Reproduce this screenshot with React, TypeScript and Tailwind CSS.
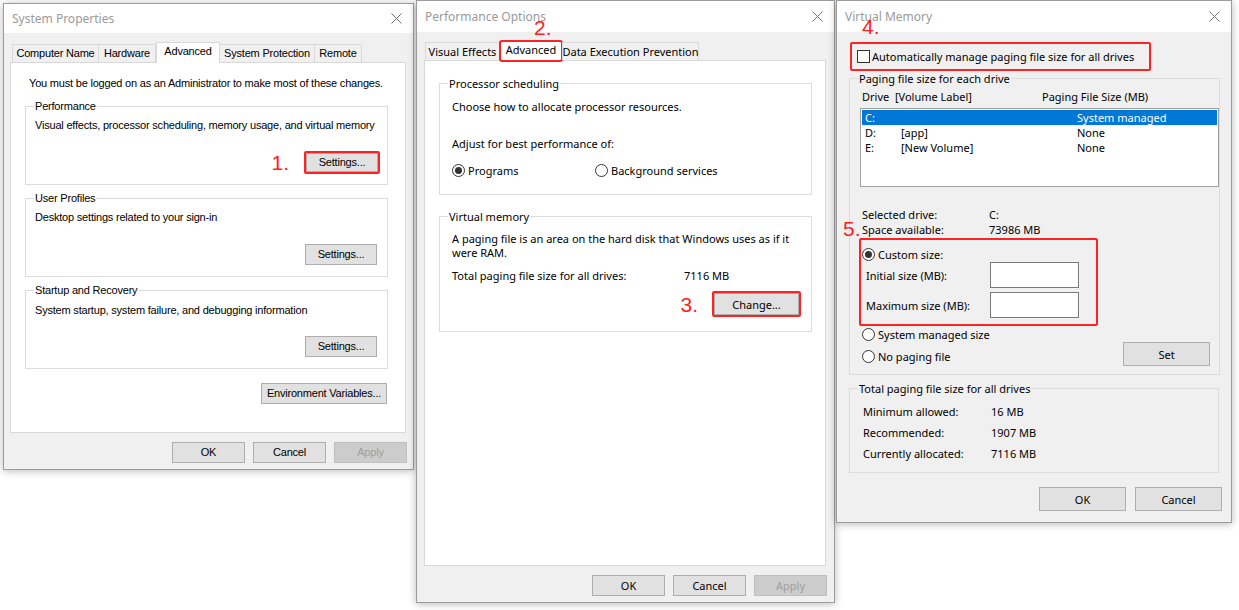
import React from 'react';

type Kids = { children?: React.ReactNode; className?: string };

const RED = 'border-[#ff2222]';

function CloseX() {
  return (
    <svg width="11" height="11" viewBox="0 0 11 11" className="shrink-0">
      <path d="M0.5 0.5L10.5 10.5M10.5 0.5L0.5 10.5" stroke="#707070" strokeWidth="1" />
    </svg>
  );
}

function Window({ title, className, bar, children }: Kids & { title: string; bar: string }) {
  return (
    <div
      className={`absolute flex flex-col bg-[#f0f0f0] border border-[#9c9c9c] shadow-[0_1px_8px_rgba(0,0,0,0.28)] leading-[15px] text-black whitespace-nowrap ${className}`}
    >
      <div className={`${bar} shrink-0 bg-white flex items-center justify-between pl-[8px] pr-[11px]`}>
        <span className="text-[12px] tracking-normal text-[#9a9a9a] font-['Noto_Sans',sans-serif]">{title}</span>
        <CloseX />
      </div>
      {children}
    </div>
  );
}

function Btn({ children, className = '', disabled = false }: Kids & { disabled?: boolean }) {
  return (
    <div
      className={`flex items-center justify-center border ${
        disabled ? 'border-[#bfbfbf] bg-[#cccccc] text-[#a0a0a0]' : 'border-[#adadad] bg-[#e1e1e1] text-black'
      } ${className}`}
    >
      {children}
    </div>
  );
}

function Group({ label, className = '', children }: Kids & { label: string }) {
  return (
    <fieldset className={`flex flex-col border border-[#dcdcdc] ${className}`}>
      <legend className="ml-[8px] px-[1px] leading-[15px]">{label}</legend>
      {children}
    </fieldset>
  );
}

function Radio({ checked = false }: { checked?: boolean }) {
  return (
    <span className="w-[13px] h-[13px] rounded-full border border-[#333333] bg-white flex items-center justify-center shrink-0">
      {checked && <span className="w-[7px] h-[7px] rounded-full bg-[#333333]" />}
    </span>
  );
}

function Num({ children, className = '' }: Kids) {
  return (
    <span className={`text-[#ff2020] text-[21px] leading-none tracking-normal font-['Liberation_Sans',Arial,sans-serif] ${className}`}>
      {children}
    </span>
  );
}

function Tab({ w, active = false, children }: Kids & { w: string; active?: boolean }) {
  if (active) {
    return (
      <div className={`${w} h-[21px] -mb-px bg-white border border-b-0 border-[#d9d9d9] flex items-center justify-center pb-[3px]`}>
        {children}
      </div>
    );
  }
  return (
    <div className={`${w} h-[18px] bg-[#f0f0f0] border border-b-0 border-[#d9d9d9] -ml-px first:ml-0 flex items-center justify-center`}>
      {children}
    </div>
  );
}

function SystemProperties() {
  return (
    <Window
      title="System Properties"
      bar="h-[29px]"
      className="left-[3px] top-[3px] w-[411px] h-[467px] text-[11px] tracking-[-0.2px] font-['Liberation_Sans',Arial,sans-serif]"
    >
      <div className="flex flex-col pl-[6px] pt-[8px]">
        <div className="relative z-10 flex items-end pl-[2px] h-[21px]">
          <Tab w="w-[87px]">Computer Name</Tab>
          <Tab w="w-[58px]">Hardware</Tab>
          <Tab w="w-[64px]" active>
            Advanced
          </Tab>
          <Tab w="w-[96px]">System Protection</Tab>
          <Tab w="w-[48px]">Remote</Tab>
        </div>
        <div className="w-[396px] h-[371px] bg-white border border-[#d9d9d9] pt-[13px] pl-[14px] flex flex-col">
          <p className="pl-[4px]">You must be logged on as an Administrator to make most of these changes.</p>

          <Group label="Performance" className="mt-[8px] w-[363px] h-[86px]">
            <p className="pl-[9px] mt-[4px]">Visual effects, processor scheduling, memory usage, and virtual memory</p>
            <div className="mt-[18px] mr-[7px] self-end flex items-center gap-[15px]">
              <Num>1.</Num>
              <div className={`border-2 ${RED} rounded-[2px]`}>
                <Btn className="w-[72px] h-[19px]">Settings...</Btn>
              </div>
            </div>
          </Group>

          <Group label="User Profiles" className="mt-[6px] w-[363px] h-[86px]">
            <p className="pl-[9px] mt-[4px]">Desktop settings related to your sign-in</p>
            <Btn className="w-[72px] h-[21px] mt-[19px] mr-[10px] self-end">Settings...</Btn>
          </Group>

          <Group label="Startup and Recovery" className="mt-[6px] w-[363px] h-[86px]">
            <p className="pl-[9px] mt-[5px]">System startup, system failure, and debugging information</p>
            <Btn className="w-[72px] h-[21px] mt-[18px] mr-[10px] self-end">Settings...</Btn>
          </Group>

          <div className="w-[363px] flex justify-end pr-[1px] mt-[14px]">
            <Btn className="w-[126px] h-[21px]">Environment Variables...</Btn>
          </div>
        </div>
        <div className="flex justify-end gap-[8px] pr-[6px] mt-[9px]">
          <Btn className="w-[73px] h-[21px]">OK</Btn>
          <Btn className="w-[73px] h-[21px]">Cancel</Btn>
          <Btn className="w-[73px] h-[21px]" disabled>
            Apply
          </Btn>
        </div>
      </div>
    </Window>
  );
}

function PerformanceOptions() {
  return (
    <Window
      title="Performance Options"
      bar="h-[31px]"
      className="left-[416px] top-0 w-[419px] h-[603px] text-[11px] font-['Noto_Sans',sans-serif]"
    >
      <Num className="absolute left-[117px] top-[16px]">2.</Num>
      <div className="flex flex-col pl-[7px] pt-[7px]">
        <div className="relative z-10 flex items-end pl-[1px] h-[21px]">
          <Tab w="w-[75px]">Visual Effects</Tab>
          <div
            className={`w-[64px] h-[22px] -mb-[2px] -ml-px bg-white border-2 ${RED} rounded-[3px] flex items-center justify-center pb-[4px]`}
          >
            Advanced
          </div>
          <Tab w="w-[137px]">Data Execution Prevention</Tab>
        </div>
        <div className="w-[402px] h-[506px] bg-white border border-[#d9d9d9] pt-[15px] pl-[14px] flex flex-col">
          <Group label="Processor scheduling" className="w-[373px] h-[119px]">
            <p className="pl-[12px] mt-[8px]">Choose how to allocate processor resources.</p>
            <p className="pl-[12px] mt-[22px]">Adjust for best performance of:</p>
            <div className="pl-[12px] mt-[12px] flex items-center">
              <div className="w-[143px] flex items-center gap-[3px]">
                <Radio checked />
                <span>Programs</span>
              </div>
              <div className="flex items-center gap-[3px]">
                <Radio />
                <span>Background services</span>
              </div>
            </div>
          </Group>

          <Group label="Virtual memory" className="mt-[14px] w-[373px] h-[123px]">
            <p className="pl-[12px] mt-[8px] leading-[14px]">
              A paging file is an area on the hard disk that Windows uses as if it
              <br />
              were RAM.
            </p>
            <div className="pl-[12px] mt-[8px] flex">
              <span className="w-[232px]">Total paging file size for all drives:</span>
              <span>7116 MB</span>
            </div>
            <div className="mt-[8px] mr-[10px] self-end flex items-center gap-[14px]">
              <Num>3.</Num>
              <div className={`border-2 ${RED} rounded-[2px]`}>
                <Btn className="w-[85px] h-[22px]">Change...</Btn>
              </div>
            </div>
          </Group>
        </div>
        <div className="flex justify-end gap-[8px] pr-[7px] mt-[9px]">
          <Btn className="w-[73px] h-[21px]">OK</Btn>
          <Btn className="w-[73px] h-[21px]">Cancel</Btn>
          <Btn className="w-[73px] h-[21px]" disabled>
            Apply
          </Btn>
        </div>
      </div>
    </Window>
  );
}

const drives = [
  { d: 'C:', label: '', size: 'System managed', sel: true },
  { d: 'D:', label: '[app]', size: 'None', sel: false },
  { d: 'E:', label: '[New Volume]', size: 'None', sel: false },
];

function VirtualMemory() {
  return (
    <Window
      title="Virtual Memory"
      bar="h-[31px]"
      className="left-[836px] top-0 w-[396px] h-[523px] text-[11px] font-['Noto_Sans',sans-serif]"
    >
      <Num className="absolute left-[25px] top-[15px]">4.</Num>
      <Num className="absolute left-[6px] top-[217px] text-[17px]">5.</Num>
      <div className="flex flex-col pl-[12px] pt-[10px]">
        <div className={`ml-[1px] w-[301px] h-[29px] border-2 ${RED} rounded-[2px] flex items-center pl-[5px] gap-[2px]`}>
          <span className="w-[13px] h-[13px] border border-[#333333] bg-white shrink-0" />
          <span>Automatically manage paging file size for all drives</span>
        </div>

        <Group label="Paging file size for each drive" className="w-[370px] h-[304px]">
          <div className="pl-[12px] mt-[3px] flex">
            <span className="w-[180px]">Drive&nbsp;&nbsp;[Volume Label]</span>
            <span>Paging File Size (MB)</span>
          </div>
          <div className="ml-[10px] mt-[4px] w-[359px] h-[79px] bg-white border border-[#a0a0a0] p-px">
            {drives.map((r) => (
              <div
                key={r.d}
                className={`h-[15px] flex items-center pl-[3px] ${r.sel ? 'bg-[#0078d7] text-white' : ''}`}
              >
                <span className="w-[36px]">{r.d}</span>
                <span className="w-[176px]">{r.label}</span>
                <span>{r.size}</span>
              </div>
            ))}
          </div>
          <div className="pl-[12px] mt-[20px] flex">
            <span className="w-[127px]">Selected drive:</span>
            <span>C:</span>
          </div>
          <div className="pl-[12px] flex">
            <span className="w-[127px]">Space available:</span>
            <span>73986 MB</span>
          </div>

          <div className={`ml-[9px] mt-[1px] w-[239px] h-[88px] border-2 ${RED} rounded-[2px] flex flex-col pt-[7px] pl-[1px]`}>
            <div className="flex items-center gap-[3px]">
              <Radio checked />
              <span>Custom size:</span>
            </div>
            <div className="flex items-center pl-[4px]">
              <span className="w-[124px]">Initial size (MB):</span>
              <span className="w-[89px] h-[26px] bg-white border border-[#7a7a7a]" />
            </div>
            <div className="flex items-center pl-[4px] mt-[4px]">
              <span className="w-[124px]">Maximum size (MB):</span>
              <span className="w-[89px] h-[26px] bg-white border border-[#7a7a7a]" />
            </div>
          </div>

          <div className="flex items-start pl-[12px] mt-[1px]">
            <div className="flex flex-col gap-[7px]">
              <div className="flex items-center gap-[3px]">
                <Radio />
                <span>System managed size</span>
              </div>
              <div className="flex items-center gap-[3px]">
                <Radio />
                <span>No paging file</span>
              </div>
            </div>
            <Btn className="ml-auto mr-[9px] mt-[15px] w-[87px] h-[24px]">Set</Btn>
          </div>
        </Group>

        <Group label="Total paging file size for all drives" className="mt-[6px] w-[370px] h-[92px]">
          <div className="pl-[13px] mt-[8px] flex flex-col gap-[6px]">
            {[
              ['Minimum allowed:', '16 MB'],
              ['Recommended:', '1907 MB'],
              ['Currently allocated:', '7116 MB'],
            ].map(([k, v]) => (
              <div key={k} className="flex">
                <span className="w-[128px]">{k}</span>
                <span>{v}</span>
              </div>
            ))}
          </div>
        </Group>

        <div className="flex justify-end gap-[9px] pr-[9px] mt-[14px]">
          <Btn className="w-[87px] h-[24px]">OK</Btn>
          <Btn className="w-[87px] h-[24px]">Cancel</Btn>
        </div>
      </div>
    </Window>
  );
}

export default function App() {
  return (
    <div className="relative w-[1239px] h-[610px] bg-white overflow-hidden">
      <SystemProperties />
      <PerformanceOptions />
      <VirtualMemory />
    </div>
  );
}
